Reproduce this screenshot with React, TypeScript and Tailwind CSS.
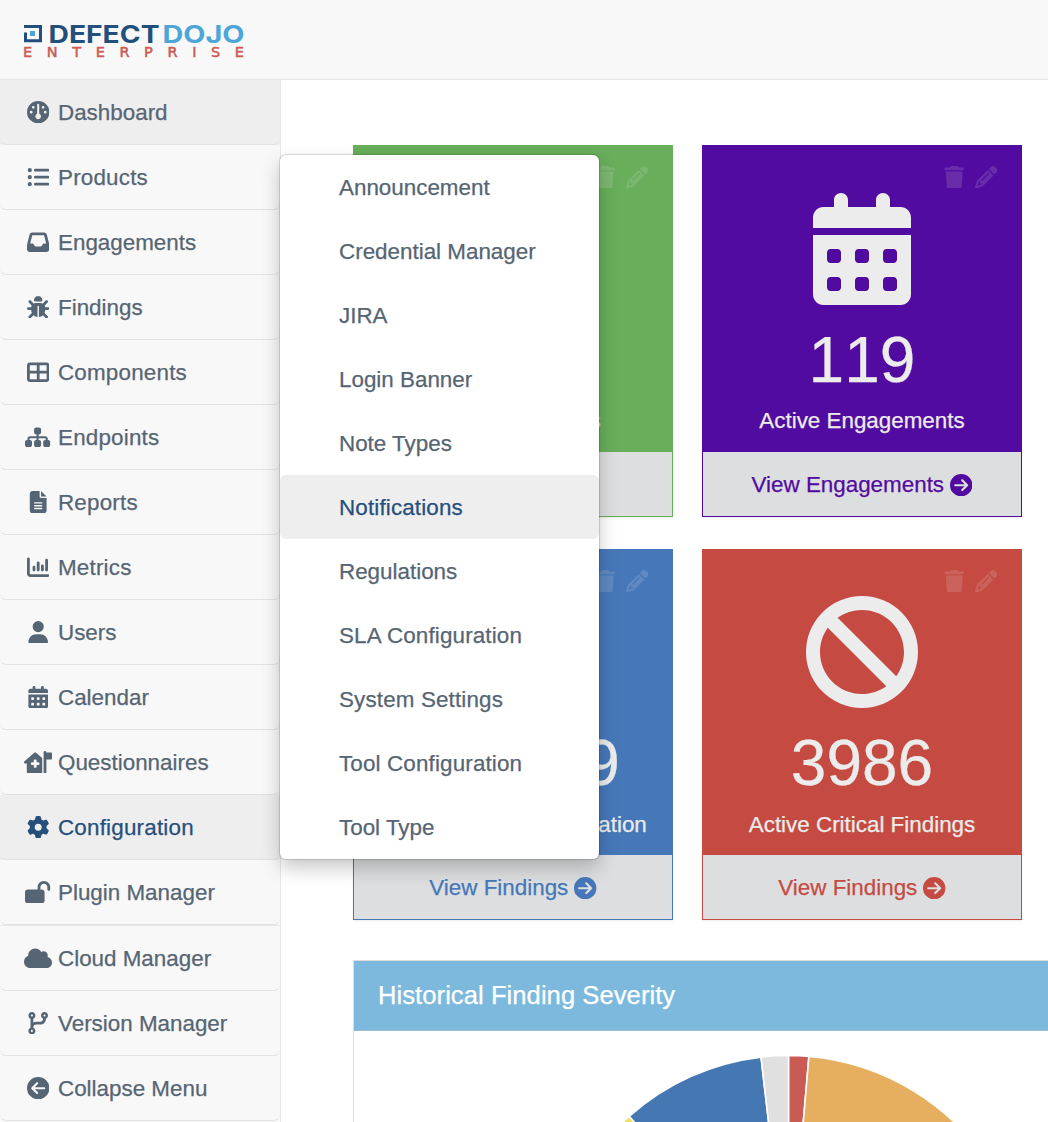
import React from "react";
import type { IconType } from "react-icons";
import {
  FaBan, FaBug, FaCalendarDays, FaChartColumn, FaCircleArrowLeft, FaCircleArrowRight, FaCloud,
  FaCodeBranch, FaFileLines, FaGauge, FaGear, FaHouseMedicalFlag, FaInbox, FaListUl, FaLockOpen,
  FaPencil, FaSitemap, FaTableCellsLarge, FaTrash, FaUser, FaCubes,
} from "react-icons/fa6";

type Item = { label: string; icon: IconType; iconWidth?: string; state?: "open" | "current"; last?: boolean; wide?: boolean };

const nav: Item[] = [
  { label: "Dashboard", icon: FaGauge, state: "current" },
  { label: "Products", icon: FaListUl, wide: true },
  { label: "Engagements", icon: FaInbox },
  { label: "Findings", icon: FaBug },
  { label: "Components", icon: FaTableCellsLarge, wide: true },
  { label: "Endpoints", icon: FaSitemap, iconWidth: "w-[1.125em]", wide: true },
  { label: "Reports", icon: FaFileLines, wide: true },
  { label: "Metrics", icon: FaChartColumn, wide: true },
  { label: "Users", icon: FaUser },
  { label: "Calendar", icon: FaCalendarDays },
  { label: "Questionnaires", icon: FaHouseMedicalFlag, iconWidth: "w-[1.25em]" },
  { label: "Configuration", icon: FaGear, state: "open", wide: true },
  { label: "Plugin Manager", icon: FaLockOpen, iconWidth: "w-[1.125em]", last: true },
  { label: "Cloud Manager", icon: FaCloud, iconWidth: "w-[1.25em]" },
  { label: "Version Manager", icon: FaCodeBranch },
  { label: "Collapse Menu", icon: FaCircleArrowLeft },
];

const submenu = [
  { label: "Announcement" },
  { label: "Credential Manager" },
  { label: "JIRA" },
  { label: "Login Banner" },
  { label: "Note Types" },
  { label: "Notifications", wide: true, active: true },
  { label: "Regulations" },
  { label: "SLA Configuration", wide: true },
  { label: "System Settings", wide: true },
  { label: "Tool Configuration", wide: true },
  { label: "Tool Type" },
];

function Logo() {
  return (
    <svg width="230" height="40" viewBox="0 0 230 40" className="block overflow-visible">
      <path d="M1.5 8.5V16.7H16.5V2.5H0" fill="none" stroke="#234f7d" strokeWidth="3" />
      <rect x="6" y="7" width="5" height="5" fill="#4da6d8" />
      <g fontFamily="Inter" fontWeight="700" fontSize="24">
        <text x="24.500" y="18.500" fill="#234f7d" textLength="111" lengthAdjust="spacingAndGlyphs">DEFECT</text>
        <text x="138.500" y="18.500" fill="#4da6d8" textLength="82" lengthAdjust="spacingAndGlyphs">DOJO</text>
      </g>
      <text x="-1" y="33" fill="#cd5a54" stroke="#cd5a54" strokeWidth="0.5" fontFamily="DejaVu Sans" fontSize="14.5" textLength="221" lengthAdjust="spacing">
        ENTERPRISE
      </text>
    </svg>
  );
}

function Sidebar() {
  return (
    <nav className="w-[281px] shrink-0 border-r border-[#e7e7e7] bg-[#f8f8f8]">
      {nav.map(({ label, icon: Icon, iconWidth, state, last, wide }) => (
        <div key={label} className={(last ? "border-b border-[#e7e7e7] " : "") + (state ? "bg-[#eeeeee]" : "")}>
          <a className={"flex h-[65px] items-center rounded-[6px] border-b border-[#e2e2e2] pl-6 " + (state === "open" ? "text-[#274f7c]" : "text-[#566573]")}>
            <span className="flex w-7 justify-center"><Icon className={"h-[1em] shrink-0 " + (iconWidth ?? "w-[1em]")} /></span>
            <span className={"ml-[6px] pt-0.5 " + (wide ? "tracking-[0.2px]" : "")}>{label}</span>
          </a>
        </div>
      ))}
    </nav>
  );
}

function Submenu() {
  return (
    <div className="absolute left-[280px] top-[155px] w-[319px] rounded-[6px] bg-white shadow-[0_0_1px_1px_rgba(0,0,0,0.15),0_9px_19px_rgba(0,0,0,0.22)]">
      {submenu.map(({ label, wide, active }) => (
        <a
          key={label}
          className={
            "flex h-16 items-center rounded-[6px] pl-[59px] pt-0.5 " +
            (active ? "bg-[#eeeeee] text-[#274f7c] " : "text-[#566573] ") +
            (wide ? "tracking-[0.15px]" : "")
          }
        >
          {label}
        </a>
      ))}
    </div>
  );
}

type CardProps = { color: string; icon: IconType; value: string; title: string; link: string; short?: boolean };

function Card({ color, icon: Icon, value, title, link, short }: CardProps) {
  return (
    <section className={"flex w-80 flex-col border border-current shadow-[0_1px_2px_rgba(0,0,0,0.08)] " + (short ? "h-[371px] " : "h-[372px] ") + color}>
      <div className={"bg-current " + (short ? "h-[305px]" : "h-[306px]")}>
        <div className="flex h-full flex-col items-center text-[#ececec]">
          <div className={"flex w-full items-start justify-end gap-2 pr-6 pt-5 opacity-15 " + (short ? "h-[46px]" : "h-[47px]")}>
            <span className="flex w-6 justify-center"><FaTrash /></span>
            <FaPencil />
          </div>
          <Icon className="shrink-0 text-[112px]" />
          <div className="mt-5 text-[64px] leading-[70px] [font-kerning:none]">{value}</div>
          <div className={short ? "mt-[11px]" : "mt-[10px]"}>{title}</div>
        </div>
      </div>
      <div className="flex flex-1 items-center justify-center gap-[6px] bg-[#dddedf] pt-0.5">
        <span>{link}</span>
        <FaCircleArrowRight />
      </div>
    </section>
  );
}

function Pie() {
  const cx = 434.5;
  const cy = 263.5;
  const r = 239;
  const at = (deg: number) => {
    const a = (deg * Math.PI) / 180;
    return `${cx + r * Math.sin(a)} ${cy - r * Math.cos(a)}`;
  };
  const slices = [
    { from: 0, to: 4.9, color: "#c95b54" },
    { from: 4.9, to: 120, color: "#e6af5f" },
    { from: 240, to: 318.2, color: "#ecdf5a" },
    { from: 318.2, to: 353.4, color: "#4578b2" },
    { from: 353.4, to: 360, color: "#e0e0e0" },
  ];
  return (
    <svg width="694" height="91" viewBox="0 0 694 91" className="block">
      {slices.map((s) => (
        <path key={s.color} d={`M${cx} ${cy}L${at(s.from)}A${r} ${r} 0 0 1 ${at(s.to)}Z`} fill={s.color} stroke="#ffffff" strokeWidth="1.6" />
      ))}
    </svg>
  );
}

export default function App() {
  return (
    <div className="relative flex h-[1122px] w-[1048px] flex-col overflow-hidden bg-white font-['Liberation_Sans',Arial,sans-serif] text-[22.4px] leading-8 [-webkit-text-stroke:0.25px]">
      <header className="h-20 shrink-0 border-b border-[#e7e7e7] bg-[#f8f8f8] pl-6 pt-6 [-webkit-text-stroke:0]">
        <Logo />
      </header>
      <div className="flex min-h-0 flex-1">
        <Sidebar />
        <main className="min-w-0 flex-1 overflow-hidden pl-[72px] pt-[65px]">
          <div className="grid w-[669px] grid-cols-[320px_320px] gap-x-[29px] gap-y-8">
            <Card color="text-[#68ae5b]" icon={FaCubes} value="14" title="Security Products" link="View Products" />
            <Card color="text-[#520ba0]" icon={FaCalendarDays} value="119" title="Active Engagements" link="View Engagements" />
            <Card color="text-[#4678b9]" icon={FaBug} value="128409" title="Findings With Remediation" link="View Findings" short />
            <Card color="text-[#c54b42]" icon={FaBan} value="3986" title="Active Critical Findings" link="View Findings" short />
          </div>
          <section className="mt-10 h-[400px] w-[720px] border border-[#dddddd]">
            <h2 className="flex h-[70px] items-center border-b border-[#9fbdd0] bg-[#7cb9dd] pb-0.5 pl-6 text-[25.6px] tracking-[0.05px] text-white">Historical Finding Severity</h2>
            <Pie />
          </section>
        </main>
      </div>
      <Submenu />
    </div>
  );
}
